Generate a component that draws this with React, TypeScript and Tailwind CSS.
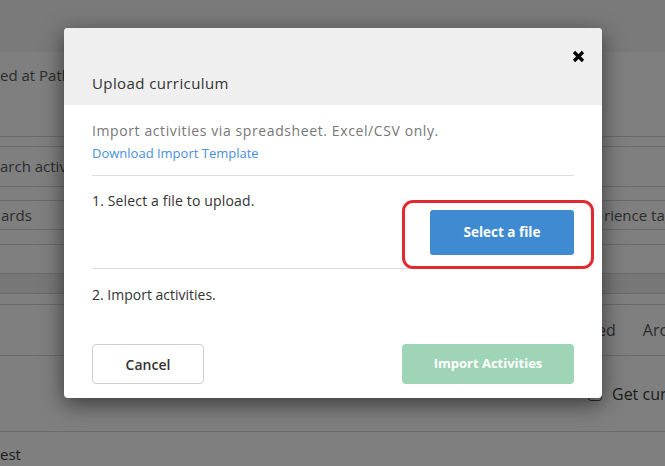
import React, { type JSX } from "react";

function CloseIcon(): JSX.Element {
  return (
    <svg width="13" height="13" viewBox="0 0 13 13" aria-hidden="true">
      <path d="M2 2 L11 11 M11 2 L2 11" stroke="#000" strokeWidth="3.2" strokeLinecap="butt" />
    </svg>
  );
}

function BackgroundPage(): JSX.Element {
  const line = "border-b border-[#d6d6d6]";
  return (
    <div className="flex h-[466px] w-[665px] flex-col overflow-hidden whitespace-nowrap bg-white text-[15px] text-[#5a5a5a]">
      <div className="h-[52px] bg-[#f4f4f4]" />
      <div className={`h-[85px] pt-[14px] leading-[18px] ${line}`}>ed at Path</div>
      <div className={`h-[10px] ${line}`} />
      <div className={`h-[40px] pt-[10px] leading-[18px] ${line}`}>arch activity</div>
      <div className={`h-[14px] ${line}`} />
      <div className={`flex h-[29px] items-center leading-[18px] ${line}`}>
        <span className="w-[600px] shrink-0 pl-[1px]">ards</span>
        <span className="ml-[4px]">rience tags</span>
      </div>
      <div className={`h-[15px] ${line}`} />
      <div className={`h-[29px] ${line}`} />
      <div className={`h-[20px] bg-[#eeeeee] ${line}`} />
      <div className={`h-[11px] ${line}`} />
      <div className={`flex h-[51px] items-center text-[16px] ${line}`}>
        <span className="ml-[597px]">ed</span>
        <span className="ml-[27px]">Arc</span>
      </div>
      <div className={`flex h-[76px] items-center text-[16px] text-[#3a3a3a] ${line}`}>
        <span className="ml-[588px] h-[14px] w-[14px] shrink-0 rounded-[3px] border border-[#555]" />
        <span className="ml-[10px]">Get cur</span>
      </div>
      <div className="flex flex-1 items-end pb-[1px] text-[15px] text-[#3a3a3a]">est</div>
    </div>
  );
}

export default function App(): JSX.Element {
  return (
    <div className="relative h-[466px] w-[665px] overflow-hidden font-['Open_Sans',sans-serif]">
      <BackgroundPage />
      <div className="absolute inset-0 bg-black/50" />

      <div className="absolute left-[64px] top-[28px] w-[538px] overflow-hidden rounded-[4px] bg-white shadow-[0_6px_22px_rgba(0,0,0,0.55)]">
        <div className="bg-[#efefef] px-[28px] pb-[12px] pt-[20px]">
          <div className="-mr-[11px] flex h-[16px] items-center justify-end">
            <CloseIcon />
          </div>
          <h2 className="mt-[9px] text-[15px] leading-[20px] tracking-[0.4px] text-[#333]">Upload curriculum</h2>
        </div>

        <div className="relative px-[28px] pb-[14px]">
          <p className="pt-[17px] text-[14px] leading-[18px] tracking-[0.6px] text-[#777]">
            Import activities via spreadsheet. Excel/CSV only.
          </p>
          <a className="mt-[4px] block text-[13px] leading-[18px] text-[#4a90d9]" href="#">
            Download Import Template
          </a>

          <div className="mt-[13px] border-t border-[#dcdcdc]" />

          <div className="pt-[16px]">
            <p className="text-[14px] leading-[18px] tracking-[0.15px] text-[#333]">1. Select a file to upload.</p>
            <div className="flex justify-end">
              <button
                type="button"
                className="h-[45px] w-[144px] rounded-[3px] bg-[#3f8ad0] text-[13.5px] font-bold text-white"
              >
                Select a file
              </button>
            </div>
          </div>

          <div className="mt-[13px] border-t border-[#dcdcdc]" />

          <p className="pt-[17px] text-[14px] leading-[18px] text-[#333]">2. Import activities.</p>

          <div className="mt-[40px] flex items-center justify-between">
            <button
              type="button"
              className="h-[40px] w-[112px] rounded-[4px] border border-[#cccccc] bg-white text-[14px] font-semibold text-[#333]"
            >
              Cancel
            </button>
            <button
              type="button"
              className="h-[40px] w-[172px] rounded-[4px] bg-[#9fd4b6] text-[13px] font-bold text-white"
            >
              Import Activities
            </button>
          </div>

          {/* red highlight annotation round the file button */}
          <div className="pointer-events-none absolute left-[338px] top-[95px] h-[69px] w-[192px] rounded-[11px] border-[3px] border-[#e02a2f]" />
        </div>
      </div>
    </div>
  );
}
